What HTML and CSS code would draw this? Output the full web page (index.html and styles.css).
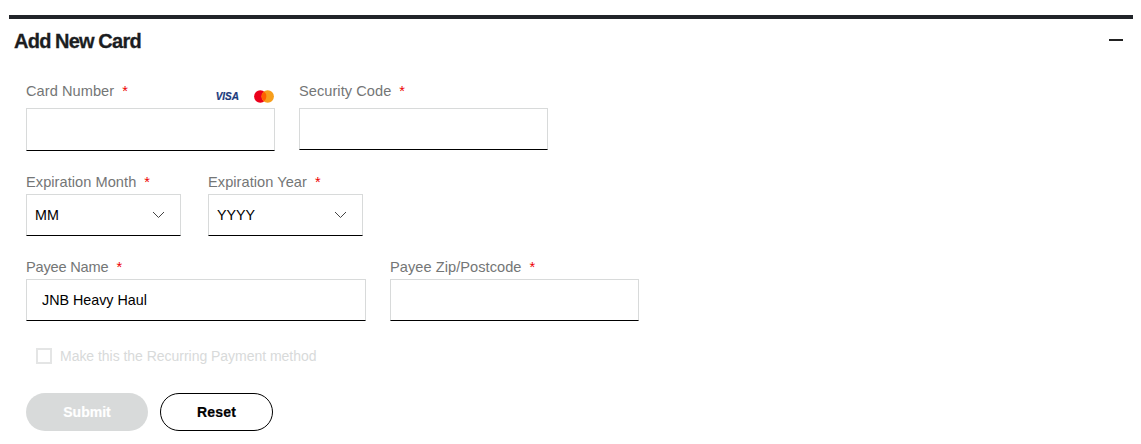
FILE: index.html
```html
<!DOCTYPE html>
<html lang="en">
<head>
<meta charset="utf-8">
<title>Add New Card</title>
<link rel="stylesheet" href="styles.css">
</head>
<body>
<section class="panel">
  <header class="panel-head">
    <h2 class="panel-title">Add New Card</h2>
    <span class="collapse" aria-label="Collapse"></span>
  </header>
  <form class="form">
    <div class="row row-card">
      <div class="field w-249">
        <div class="label-row label-row-card">
          <label class="label">Card Number<span class="req">*</span></label>
          <span class="brands">
            <span class="visa">VISA</span>
            <svg class="mc" width="20" height="13" viewBox="0 0 20 13"><circle cx="6.3" cy="6.5" r="6.2" fill="#eb001b"/><circle cx="13.7" cy="6.5" r="6.2" fill="#f79e1b"/><path d="M10 1.6a6.2 6.2 0 0 1 0 9.8a6.2 6.2 0 0 1 0-9.8z" fill="#ff5f00"/></svg>
          </span>
        </div>
        <input class="input input-tall" type="text">
      </div>
      <div class="field w-249">
        <div class="label-row label-row-card">
          <label class="label">Security Code<span class="req">*</span></label>
        </div>
        <input class="input input-short" type="text">
      </div>
    </div>
    <div class="row row-exp">
      <div class="field w-155">
        <div class="label-row"><label class="label">Expiration Month<span class="req">*</span></label></div>
        <div class="select-wrap">
          <select class="input select"><option>MM</option></select>
          <svg class="chev" width="13" height="8" viewBox="0 0 13 8"><path d="M1 1l5.5 5.5L12 1" fill="none" stroke="#444" stroke-width="1"/></svg>
        </div>
      </div>
      <div class="field w-155">
        <div class="label-row"><label class="label">Expiration Year<span class="req">*</span></label></div>
        <div class="select-wrap">
          <select class="input select"><option>YYYY</option></select>
          <svg class="chev" width="13" height="8" viewBox="0 0 13 8"><path d="M1 1l5.5 5.5L12 1" fill="none" stroke="#444" stroke-width="1"/></svg>
        </div>
      </div>
    </div>
    <div class="row row-payee">
      <div class="field w-340">
        <div class="label-row"><label class="label label-tight">Payee Name<span class="req">*</span></label></div>
        <input class="input input-name" type="text" value="JNB Heavy Haul">
      </div>
      <div class="field w-249">
        <div class="label-row"><label class="label">Payee Zip/Postcode<span class="req">*</span></label></div>
        <input class="input" type="text">
      </div>
    </div>
    <div class="check-row">
      <span class="checkbox"></span>
      <span class="check-text">Make this the Recurring Payment method</span>
    </div>
    <div class="actions">
      <button type="button" class="btn btn-submit" disabled>Submit</button>
      <button type="button" class="btn btn-reset">Reset</button>
    </div>
  </form>
</section>
</body>
</html>
```

FILE: styles.css
```css
* { box-sizing: border-box; }
html, body { margin: 0; background: #fff; }
body {
  padding: 15px 8px 0 9px;
  font-family: "Liberation Sans", Arial, sans-serif;
  height: 444px;
  overflow: hidden;
}
.panel { border-top: 4px solid #212429; }
.panel-head {
  display: flex;
  align-items: center;
  justify-content: space-between;
  height: 44px;
  padding: 0 10px 0 5px;
}
.panel-title {
  margin: 0;
  font-size: 20px;
  font-weight: 700;
  letter-spacing: -0.75px;
  word-spacing: -0.4px;
  color: #1b1d1f;
  -webkit-text-stroke: 0.3px #1b1d1f;
}
.collapse { width: 14px; height: 2px; background: #222; margin-bottom: 2px; }
.form { padding: 0 0 0 17px; }
.row { display: flex; }
.row-card { gap: 24px; margin-top: 18px; }
.row-exp { gap: 27px; margin-top: 21px; }
.row-payee { gap: 24px; margin-top: 21px; }
.field { display: flex; flex-direction: column; }
.w-249 { width: 249px; }
.w-155 { width: 155px; }
.w-340 { width: 340px; }
.label-row { display: flex; justify-content: space-between; height: 22px; }
.label-row-card { height: 27px; }
.label {
  font-size: 14.6px;
  line-height: 20px;
  letter-spacing: 0.05px;
  color: #747676;
  height: 20px;
}
.label-tight { letter-spacing: -0.2px; }
.req { color: #e00; margin-left: 8px; }
.brands { display: flex; align-items: center; gap: 15px; height: 14px; margin-top: 8px; margin-right: 1px; }
.visa {
  font-size: 10px;
  font-weight: 700;
  font-style: italic;
  color: #1a3a7c;
  letter-spacing: 0;
  -webkit-text-stroke: 0.2px #1a3a7c;
}
.input {
  display: block;
  width: 100%;
  height: 42px;
  border: 1px solid #d8dada;
  border-bottom-color: #000;
  border-radius: 0;
  background: #fff;
  font-family: inherit;
  font-size: 14.3px;
  color: #000;
  outline: none;
  padding: 0 8px;
  margin: 0;
}
.input-tall { height: 43px; }
.input-name { padding: 0 15px; }
.select-wrap { position: relative; }
.select { appearance: none; -webkit-appearance: none; padding: 0 8px; }
.chev { position: absolute; right: 16px; top: 17px; }
.check-row { display: flex; align-items: center; margin: 27px 0 0 10px; height: 16px; }
.checkbox { width: 16px; height: 16px; border: 2px solid #e4e5e5; margin-right: 8px; }
.check-text { font-size: 14px; color: #d8dada; letter-spacing: -0.03px; }
.actions { display: flex; gap: 12px; margin-top: 29px; }
.btn {
  height: 38px;
  border-radius: 19px;
  font-family: inherit;
  font-size: 14px;
  font-weight: 700;
  padding: 0;
}
.btn-submit { width: 122px; background: #d8dada; border: 0; color: #fff; -webkit-text-stroke: 0.2px #fff; }
.btn-reset { width: 113px; background: #fff; border: 1px solid #000; color: #000; letter-spacing: 0.2px; -webkit-text-stroke: 0.2px #000; }
```
